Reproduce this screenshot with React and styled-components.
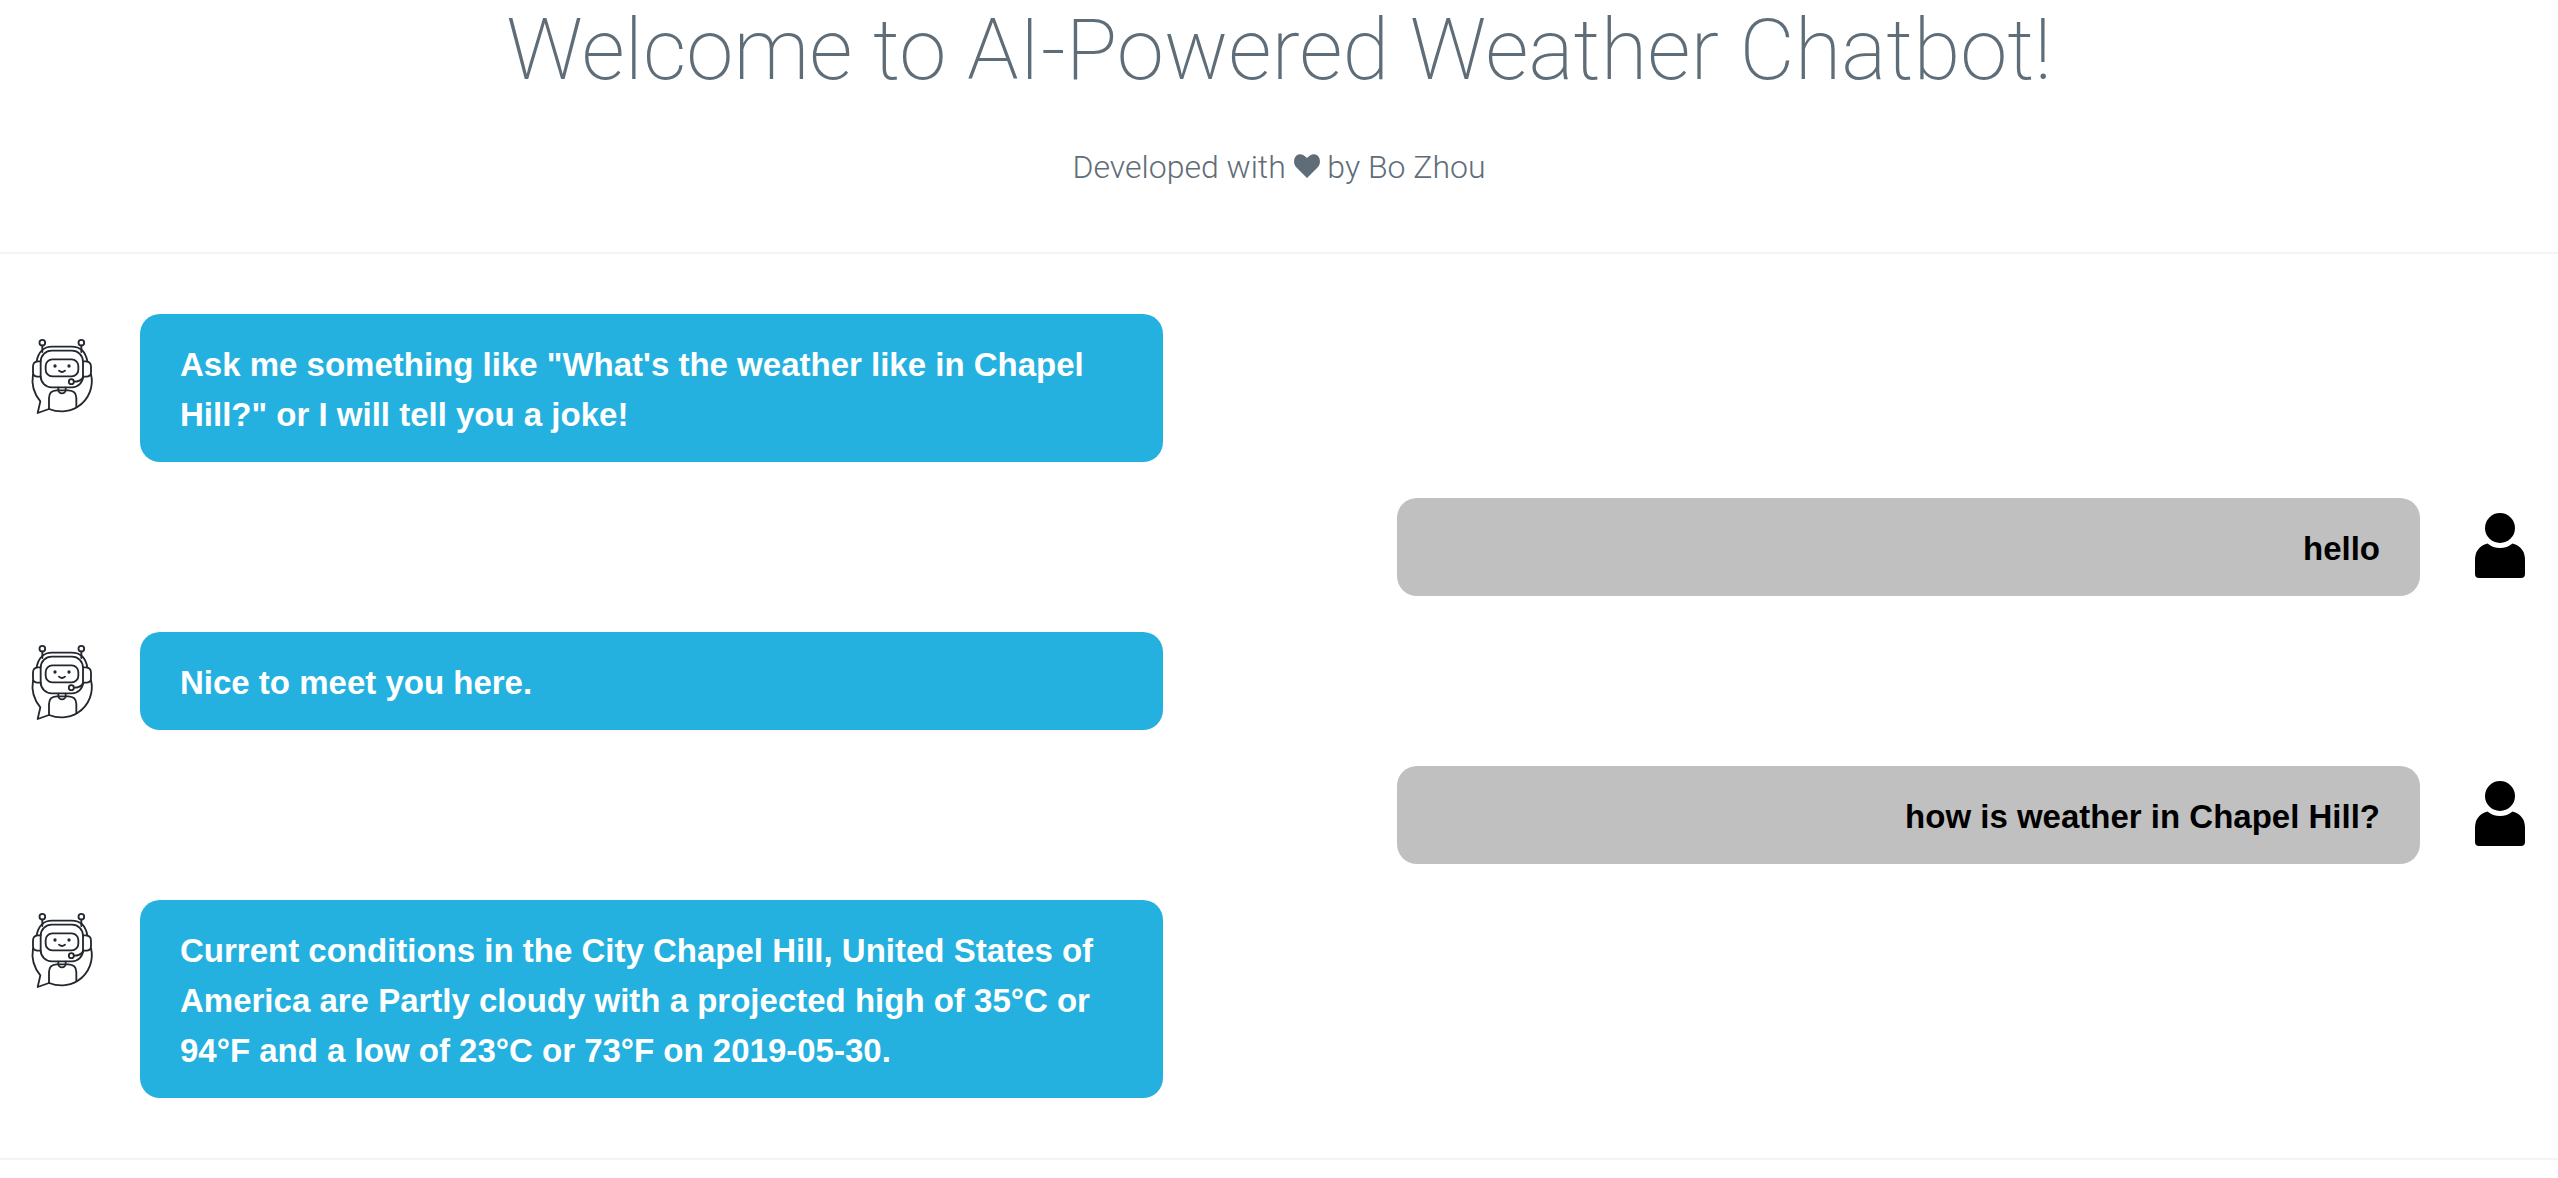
import React from 'react';
import styled, { createGlobalStyle } from 'styled-components';

const GlobalStyle = createGlobalStyle`
  body {
    margin: 0;
    background: #fff;
    font-family: "Liberation Sans", Helvetica, Arial, sans-serif;
  }
`;

const Header = styled.header`
  padding-bottom: 60px;
  border-bottom: 2px solid #f4f4f4;
  color: #5f6d78;
  font-family: Roboto, "Helvetica Neue", sans-serif;
  text-align: center;
`;

const Title = styled.h1`
  margin: 0 0 42px;
  font-size: 85px;
  font-weight: 200;
  line-height: 100px;
`;

const Byline = styled.p`
  margin: 0;
  font-size: 32px;
  font-weight: 300;
  line-height: 50px;
`;

const Heart = styled.svg`
  width: 26px;
  height: 24px;
  fill: currentColor;
`;

const Conversation = styled.ul`
  display: flex;
  flex-direction: column;
  gap: 36px;
  margin: 0;
  padding: 60px 20px;
  border-bottom: 2px solid #f4f4f4;
  list-style: none;
`;

const Message = styled.li`
  display: flex;
  flex-direction: ${({ $own }) => ($own ? 'row-reverse' : 'row')};
  align-items: flex-start;
  gap: ${({ $own }) => ($own ? 42 : 36)}px;
`;

const Avatar = styled.svg`
  flex: none;
  width: ${({ $own }) => ($own ? 76 : 84)}px;
  height: 80px;
  margin-top: ${({ $lead }) => ($lead ? 22 : 10)}px;
`;

const Bubble = styled.p`
  box-sizing: border-box;
  width: 40vw;
  margin: 0;
  padding: 26px 40px 22px;
  border-radius: 20px;
  background: ${({ $own }) => ($own ? '#c0c0c0' : '#24b1df')};
  color: ${({ $own }) => ($own ? '#000' : '#fff')};
  font-size: 33px;
  font-weight: 700;
  line-height: 50px;
  text-align: ${({ $own }) => ($own ? 'right' : 'left')};
`;

function BotAvatar({ lead }) {
  return (
    <Avatar $lead={lead} viewBox="0 18 252 240" role="img" aria-label="Bot">
      <g fill="none" stroke="#23272e" strokeWidth="5.5" strokeLinecap="round" strokeLinejoin="round">
        <circle cx="67" cy="38" r="8.5" />
        <circle cx="184" cy="38" r="8.5" />
        <path d="M67 47V66M184 47V66" />
        <path d="M50 94C55 66 72 50 96 50H155C180 50 197 66 202 94" />
        <rect x="62" y="62" width="127" height="110" rx="33" />
        <rect x="77" y="88" width="98" height="51" rx="20" />
        <path d="M62 94H53Q39 95 39 110V127Q39 139 51 140H62" />
        <path d="M189 94H198Q213 95 213 110V127Q213 139 201 140H189" />
        <path d="M39 133C34 162 42 191 61 214L53 249L87 237" />
        <path d="M213 133C221 166 210 207 171 232C145 248 112 247 87 237" />
        <path d="M87 236V204Q87 182 110 181H145Q169 182 169 204V231" />
        <path d="M115 173V179A11 11 0 0 0 137 179V173" />
        <circle cx="154" cy="155" r="7.5" />
        <path d="M162 155C176 155 184 150 190 142" />
        <path d="M117 122Q126 130 135 122" />
      </g>
      <circle cx="105" cy="108" r="5" fill="#23272e" />
      <circle cx="147" cy="108" r="5" fill="#23272e" />
    </Avatar>
  );
}

function UserAvatar() {
  return (
    <Avatar $own viewBox="0 0 76 80" role="img" aria-label="You">
      <circle cx="38" cy="20" r="15" />
      <path d="M25.5 35.5Q31 40 38 40T50.5 35.5Q63 39 63 52V66Q63 70 59 70H17Q13 70 13 66V52Q13 39 25.5 35.5Z" />
    </Avatar>
  );
}

const messages = [
  { text: 'Ask me something like "What\'s the weather like in Chapel Hill?" or I will tell you a joke!' },
  { own: true, text: 'hello' },
  { text: 'Nice to meet you here.' },
  { own: true, text: 'how is weather in Chapel Hill?' },
  {
    text: 'Current conditions in the City Chapel Hill, United States of America are Partly cloudy with a projected high of 35°C or 94°F and a low of 23°C or 73°F on 2019-05-30.',
  },
];

export default function App() {
  return (
    <>
      <GlobalStyle />
      <Header>
        <Title>Welcome to AI-Powered Weather Chatbot!</Title>
        <Byline>
          Developed with{' '}
          <Heart viewBox="0 0 26 24" role="img" aria-label="love">
            <path d="M13 24L2.5 13.5C-1 10 -.5 4 2.5 1.5C5.500 -1 9.500 0 13 4C16.500 0 20.500 -1 23.500 1.500C26.500 4 27 10 23.500 13.500Z" />
          </Heart>{' '}
          by Bo Zhou
        </Byline>
      </Header>
      <main>
        <Conversation>
          {messages.map((message, index) => (
            <Message key={message.text} $own={message.own}>
              {message.own ? <UserAvatar /> : <BotAvatar lead={index === 0} />}
              <Bubble $own={message.own}>{message.text}</Bubble>
            </Message>
          ))}
        </Conversation>
      </main>
    </>
  );
}
